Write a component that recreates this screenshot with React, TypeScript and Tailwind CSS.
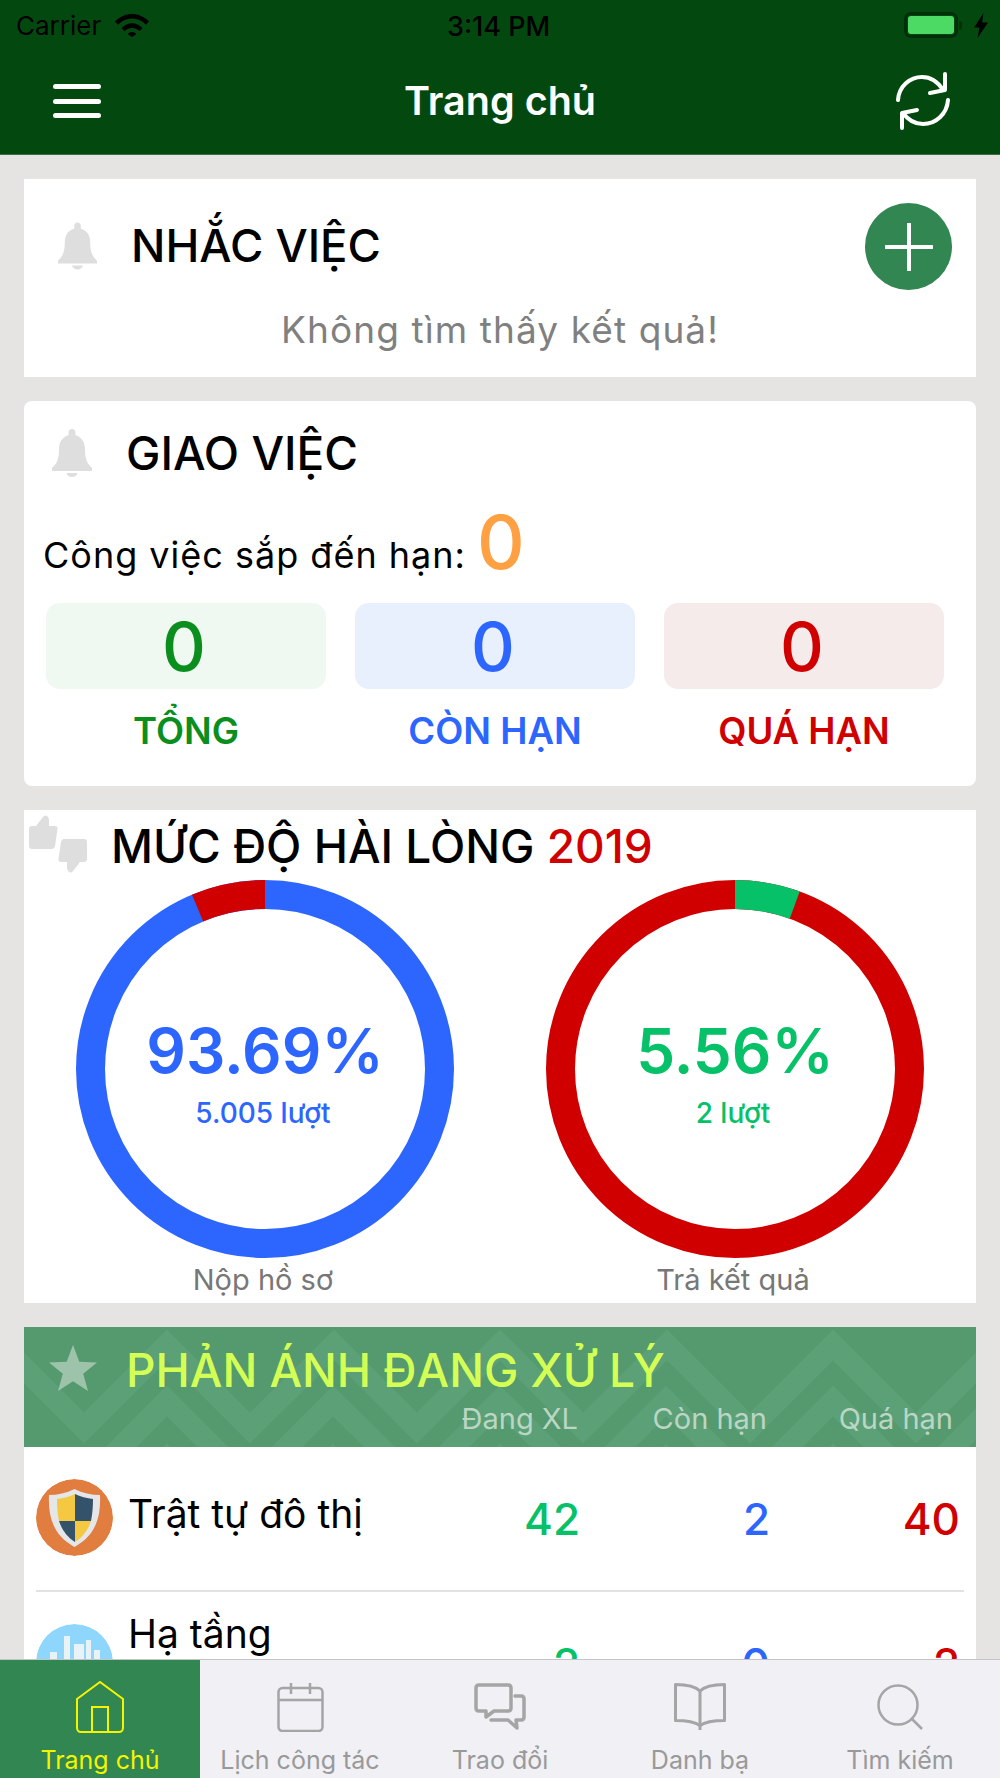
import type { ReactNode } from 'react';

const sys = 'font-[Inter,"Noto_Sans",sans-serif]';
const thumb = 'M0 14q0-3 3-3h4L14 2q2-2.500 4-1t2 4v6h6q3 0 2.500 3l-2.500 17q-.5 3-3.500 3H3q-3 0-3-3z';

function Bell({ className }: { className: string }) {
  return (
    <svg viewBox="0 0 40 48" className={className} fill="#dedede">
      <path d="M20 0c2 0 3.400 1.500 3.400 3.400v2.800C30 8 33 13.500 33 20c0 9 1.500 14 7 19v3H0v-3c5.500-5 7-10 7-19 0-6.500 3-12 9.600-13.800V3.400C16.600 1.500 18 0 20 0z" />
      <path d="M14.500 44h11c-.5 2.500-2.800 4-5.500 4s-5-1.500-5.500-4z" />
    </svg>
  );
}

function Donut({ value, accent, rest, clockwise }: { value: number; accent: string; rest: string; clockwise: boolean }) {
  const r = 174.500;
  const c = 2 * Math.PI * r;
  const len = (value / 100) * c;
  return (
    <svg viewBox="0 0 378 378" className="absolute inset-0 w-[378px] h-[378px]">
      <circle cx="189" cy="189" r={r} fill="none" stroke={rest} strokeWidth="29" />
      <circle
        cx="189"
        cy="189"
        r={r}
        fill="none"
        stroke={accent}
        strokeWidth="29"
        strokeDasharray={`${len} ${c - len}`}
        transform={clockwise ? 'rotate(-90 189 189)' : `rotate(${-90 - (value / 100) * 360} 189 189)`}
      />
    </svg>
  );
}

function Gauge({ pct, count, label, color, accent, rest, value, clockwise }: { pct: string; count: string; label: string; color: string; accent: string; rest: string; value: number; clockwise: boolean }) {
  return (
    <div className="w-[378px] flex flex-col items-center">
      <div className="relative w-[378px] h-[378px] flex flex-col items-center pt-[131px]">
        <Donut value={value} accent={accent} rest={rest} clockwise={clockwise} />
        <div className={`text-[62px] leading-[80px] font-semibold ${color}`}>{pct}</div>
        <div className={`text-[28px] leading-[34px] mt-[5px] pr-[4px] font-medium ${color}`}>{count}</div>
      </div>
      <div className="text-[29px] leading-[32px] mt-[6px] pr-[4px] text-[#777777]">{label}</div>
    </div>
  );
}

function Stat({ n, label, box, color }: { n: string; label: string; box: string; color: string }) {
  return (
    <div className="w-[280px] flex flex-col items-center">
      <div className={`w-full h-[86px] rounded-[14px] flex items-center justify-center pr-[4px] text-[68px] font-medium ${box} ${color}`}>{n}</div>
      <div className={`mt-[20px] text-[36.500px] leading-[44px] font-semibold ${color}`}>{label}</div>
    </div>
  );
}

function Row({ icon, label, labelClass, a, b, c }: { icon: ReactNode; label: string; labelClass: string; a: string; b: string; c: string }) {
  return (
    <div className="flex items-start h-[145px] pt-[32px] mx-[12px] border-b-2 border-[#e2e2e2]">
      <div className="w-[77px] h-[77px] rounded-full overflow-hidden shrink-0">{icon}</div>
      <div className={`ml-[15px] w-[341px] text-[39px] leading-[50px] text-black ${labelClass}`}>{label}</div>
      <div className="w-[111px] text-right text-[44px] leading-[60px] pt-[10px] font-medium text-[#06c167]">{a}</div>
      <div className="w-[190px] text-right text-[44px] leading-[60px] pt-[10px] font-medium text-[#2d66ff]">{b}</div>
      <div className="w-[190px] text-right text-[44px] leading-[60px] pt-[10px] font-medium text-[#d00000]">{c}</div>
    </div>
  );
}

function Tab({ label, active, children }: { label: string; active?: boolean; children: ReactNode }) {
  return (
    <div className={`w-[200px] flex flex-col items-center pt-[18px] ${active ? 'bg-[#318651] text-[#f4f400]' : 'text-[#999999]'}`}>
      <div className="h-[58px] flex items-center justify-center">{children}</div>
      <div className="mt-[9px] text-[25px] leading-[30px]">{label}</div>
    </div>
  );
}

export default function App() {
  return (
    <div className={`relative w-[1000px] h-[1778px] flex flex-col overflow-hidden bg-[#e5e4e2] ${sys}`}>
      <header className="h-[155px] shrink-0 bg-[#03490f] border-b border-[#3a6b42]">
        <div className="h-[50px] flex items-center justify-between pl-[16px] pr-[12px] text-black">
          <div className="flex items-center gap-[14px] text-[26px]">
            Carrier
            <svg viewBox="0 0 34 24" className="w-[34px] h-[24px]" fill="black">
              <path d="M0 8.500C9.500-1.500 24.500-1.500 34 8.500l-3 3.200c-8-8.300-20-8.300-28 0z" />
              <path d="M6.500 15c6-6.300 15-6.300 21 0l-3 3.200c-4.200-4.400-10.800-4.400-15 0z" />
              <path d="M12.500 21c2.500-2.700 6.500-2.700 9 0L17 24z" />
            </svg>
          </div>
          <div className="text-[27px] font-medium absolute left-[447px] top-[7px]">3:14 PM</div>
          <div className="flex items-center gap-[5px]">
            <div className="w-[54px] h-[26px] rounded-[7px] border-[3px] border-[#022f0a] p-[1px]">
              <div className="w-full h-full rounded-[3px] bg-[#4cd964]" />
            </div>
            <div className="w-[3px] h-[9px] bg-[#022f0a] rounded-r-[3px] -ml-[4px]" />
            <svg viewBox="0 0 14 25" className="w-[14px] h-[25px] ml-[7px]" fill="black">
              <path d="M9.500 0L0 14.500h5.500L3.500 25 14 9.500H8z" />
            </svg>
          </div>
        </div>
        <div className="h-[104px] relative flex items-center justify-center">
          <div className="absolute left-[53px] top-[34px] w-[48px] flex flex-col gap-[9.500px]">
            <div className="h-[5px] rounded-full bg-white" />
            <div className="h-[5px] rounded-full bg-white" />
            <div className="h-[5px] rounded-full bg-white" />
          </div>
          <div className="text-[39.500px] font-semibold text-white">Trang chủ</div>
          <svg viewBox="0 0 54 58" className="absolute left-[896px] top-[22px] w-[54px] h-[58px]" fill="none" stroke="white" strokeWidth="4" strokeLinecap="round" strokeLinejoin="round">
            <path d="M2 28C3 14 14 5 26 5c9 0 16 5 21 13" />
            <path d="M49 2v16l-15 3" />
            <path d="M52 28c-1 14-12 24-25 24-8 0-15-4-20-11" />
            <path d="M6 56V41l15-3" />
          </svg>
        </div>
      </header>

      <main className="flex-1 overflow-hidden px-[24px] pt-[24px] flex flex-col gap-[24px]">
        <section className="bg-white h-[198px] shrink-0 relative">
          <div className="flex items-center pl-[34px] pt-[16px] h-[118px]">
            <Bell className="w-[39px] h-[48px]" />
            <div className="ml-[34px] text-[45.500px] leading-[50px] font-medium text-black">NHẮC VIỆC</div>
          </div>
          <div className="absolute right-[24px] top-[24px] w-[87px] h-[87px] rounded-full bg-[#318651] flex items-center justify-center">
            <svg viewBox="0 0 48 48" className="w-[48px] h-[48px]" stroke="white" strokeWidth="4" strokeLinecap="round">
              <path d="M24 1v46M1 24h46" />
            </svg>
          </div>
          <div className="text-center text-[37px] tracking-[1.100px] leading-[50px] text-[#808080] mt-[8px]">Không tìm thấy kết quả!</div>
        </section>

        <section className="bg-white h-[385px] shrink-0 rounded-[8px] px-[20px]">
          <div className="flex items-center pt-[27px] pl-[8px]">
            <Bell className="w-[40px] h-[48px]" />
            <div className="ml-[34px] text-[46px] leading-[50px] font-medium text-black">GIAO VIỆC</div>
          </div>
          <div className="flex items-center h-[90px] mt-[32px] -ml-[1px] text-[36px] tracking-[1px] text-black">
            Công việc sắp đến hạn:
            <span className="ml-[11px] text-[74px] leading-[70px] font-medium text-[#ffa142] -mt-[26px]">0</span>
          </div>
          <div className="flex justify-between pl-[2px] pr-[12px] mt-[3px]">
            <Stat n="0" label="TỔNG" box="bg-[#eff9f1]" color="text-[#0a8f1f]" />
            <Stat n="0" label="CÒN HẠN" box="bg-[#e8effd]" color="text-[#2d66ff]" />
            <Stat n="0" label="QUÁ HẠN" box="bg-[#f5ebeb]" color="text-[#d00000]" />
          </div>
        </section>

        <section className="bg-white h-[493px] shrink-0">
          <div className="flex items-start h-[70px]">
            <svg viewBox="0 0 58 58" className="w-[58px] h-[58px] ml-[5px] mt-[5px]" fill="#dedede">
              <path d={thumb} />
              <path d={thumb} transform="rotate(180 29 29)" />
            </svg>
            <div className="ml-[24px] mt-[11px] text-[46px] leading-[50px] font-medium text-black">
              MỨC ĐỘ HÀI LÒNG <span className="text-[#d00000]">2019</span>
            </div>
          </div>
          <div className="flex pl-[52px] gap-[92px]">
            <Gauge pct="93.69%" count="5.005 lượt" label="Nộp hồ sơ" color="text-[#2d66ff]" accent="#d00000" rest="#2d66ff" value={6.31} clockwise={false} />
            <Gauge pct="5.56%" count="2 lượt" label="Trả kết quả" color="text-[#06c167]" accent="#06c167" rest="#d00000" value={5.56} clockwise />
          </div>
        </section>

        <section className="bg-white shrink-0">
          <div className="relative h-[120px] bg-[#549a6e] overflow-hidden">
            <svg className="absolute inset-0 w-full h-full" viewBox="0 0 952 120" fill="none" stroke="#5ba076" strokeWidth="22">
              <path d="M-23 0L60-83 143 0 226-83 310 0 393-83 476 0 559-83 643 0 726-83 809 0 892-83 975 0" transform="translate(83 0) scale(1 -1) translate(-83 -18)" />
              <path d="M-23 157L60 74 143 157 226 74 310 157 393 74 476 157 559 74 643 157 726 74 809 157 892 74 975 157" transform="translate(83 0)" />
              <path d="M-23 215L60 132 143 215 226 132 310 215 393 132 476 215 559 132 643 215 726 132 809 215 892 132 975 215" transform="translate(83 0)" />
            </svg>
            <svg viewBox="0 0 48 46" className="absolute left-[25px] top-[18px] w-[48px] h-[46px]" fill="#9dc4aa">
              <path d="M24 0l6.300 16.800L48 17.600 34.200 28.800 39 46 24 36.200 9 46l4.800-17.200L0 17.600l17.700-.8z" />
            </svg>
            <div className="absolute left-[102px] top-[18px] text-[46px] leading-[50px] font-medium text-[#d4ff55]">PHẢN ÁNH ĐANG XỬ LÝ</div>
            <div className="absolute right-[23px] top-[76px] flex text-[29px] leading-[32px] text-[#bcd6c5]">
              <div className="w-[200px] text-right">Đang XL</div>
              <div className="w-[189px] text-right">Còn hạn</div>
              <div className="w-[186px] text-right">Quá hạn</div>
            </div>
          </div>
          <Row
            label="Trật tự đô thị"
            labelClass="mt-[10px]"
            a="42"
            b="2"
            c="40"
            icon={
              <svg viewBox="0 0 77 77" className="w-full h-full">
                <circle cx="38.500" cy="38.500" r="38.500" fill="#e27d40" />
                <path d="M38.500 10c8 4 17 6 25.500 6 1 22-4 40-25.500 52C17 56 12 38 13 16c8.500 0 17.500-2 25.500-6z" fill="#e4e6e8" />
                <path d="M39 15c5 2.500 12 4.500 18 5 0 7-.5 15-2 22H39z" fill="#34536b" />
                <path d="M39 15c-5 2.500-12 4.500-18 5 0 7 .5 15 2 22h16z" fill="#f5c842" />
                <path d="M23 42h16v21c-8-5-13-12-16-21z" fill="#34536b" />
                <path d="M55 42H39v21c8-5 13-12 16-21z" fill="#f5c842" />
              </svg>
            }
          />
          <Row
            label="Hạ tầng"
            labelClass="-mt-[15px]"
            a="2"
            b="0"
            c="2"
            icon={
              <svg viewBox="0 0 77 77" className="w-full h-full">
                <circle cx="38.500" cy="38.500" r="38.500" fill="#8ed6fb" />
                <path d="M28 12h6v30h-6zM38 20h10v22H38zM50 16h5v26h-5zM14 28h7v14h-7zM58 26h6v16h-6z" fill="#e9f2f7" />
              </svg>
            }
          />
        </section>
      </main>

      <nav className="h-[119px] shrink-0 flex bg-[#f0f0f5] border-t border-[#c4c4c8]">
        <Tab label="Trang chủ" active>
          <svg viewBox="0 0 48 52" className="w-[48px] h-[52px]" fill="none" stroke="#f4f400" strokeWidth="2">
            <path d="M1 18L24 1l23 17v29c0 2-1.500 4-4 4H5c-2.500 0-4-2-4-4z" />
            <path d="M16 51V26h16v25" />
          </svg>
        </Tab>
        <Tab label="Lịch công tác">
          <svg viewBox="0 0 47 50" className="w-[47px] h-[50px]" fill="none" stroke="#a5a5a5" strokeWidth="2.500">
            <rect x="1.500" y="6" width="44" height="43" rx="4" />
            <path d="M1.500 18h44M14 1v11M33 1v11" />
          </svg>
        </Tab>
        <Tab label="Trao đổi">
          <svg viewBox="0 0 52 48" className="w-[52px] h-[48px]" fill="none" stroke="#a5a5a5" strokeWidth="3.500" strokeLinejoin="round" strokeLinecap="round">
            <path d="M5 2h29q3 0 3 3v20q0 3-3 3H20l-8 6v-6H5q-3 0-3-3V5q0-3 3-3z" />
            <path d="M41 13h6q3 0 3 3v18q0 3-3 3h-5l1 8-9-8H17" />
          </svg>
        </Tab>
        <Tab label="Danh bạ">
          <svg viewBox="0 0 52 48" className="w-[52px] h-[48px]" fill="none" stroke="#a5a5a5" strokeWidth="3" strokeLinejoin="round">
            <path d="M26 8C21 3 12 1.500 1.500 1.500v36c10 0 19 1 24.500 5 5.500-4 14.500-5 24.500-5v-36C40 1.500 31 3 26 8z" />
            <path d="M26 8v39" />
          </svg>
        </Tab>
        <Tab label="Tìm kiếm">
          <svg viewBox="0 0 46 46" className="w-[46px] h-[46px]" fill="none" stroke="#a5a5a5" strokeWidth="2.500">
            <circle cx="21" cy="21" r="19.500" />
            <path d="M34 34l11 11" />
          </svg>
        </Tab>
      </nav>
    </div>
  );
}
